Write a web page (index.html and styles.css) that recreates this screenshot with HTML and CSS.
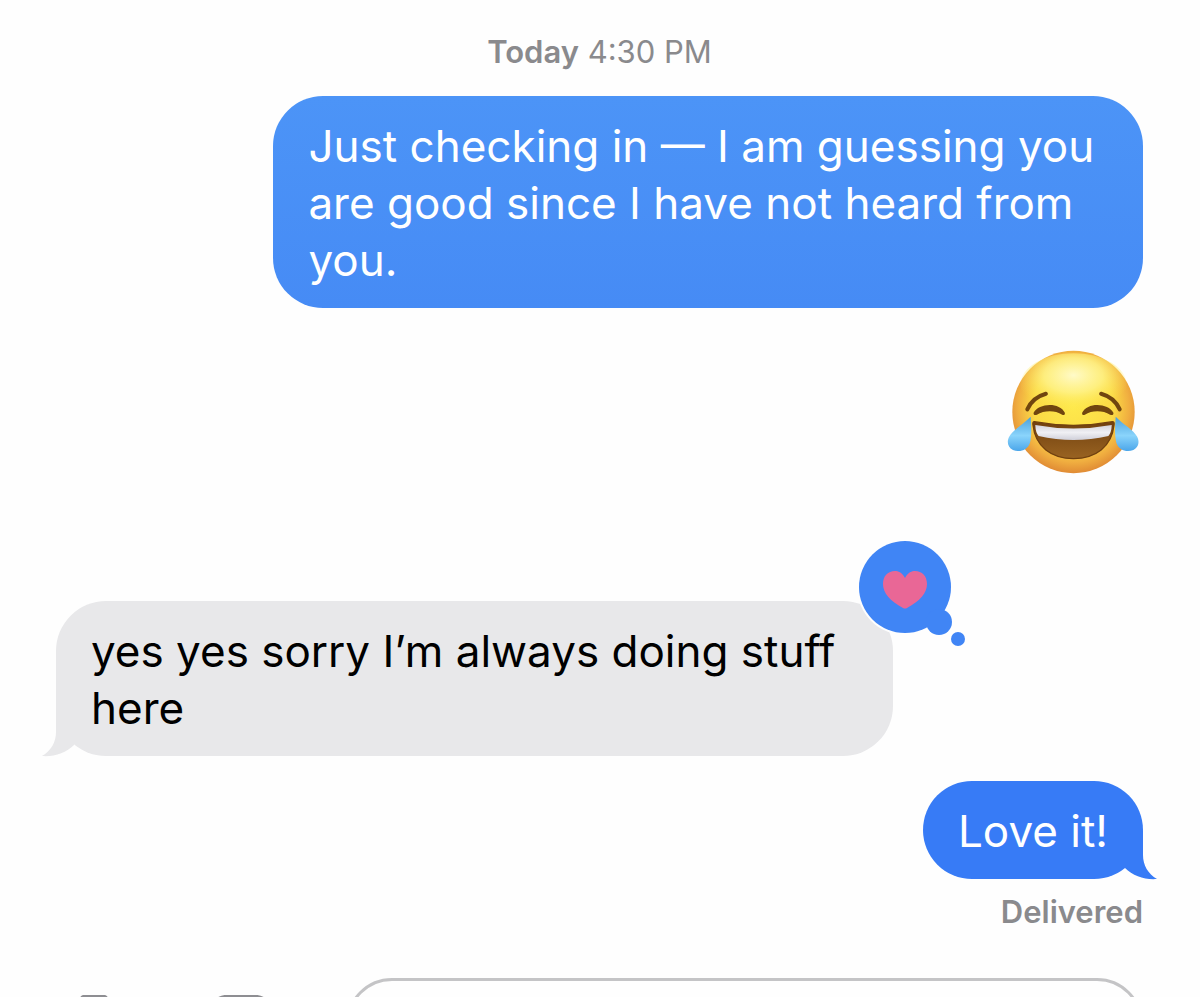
FILE: index.html
```
<!DOCTYPE html>
<html lang="en">
<head>
  <meta charset="UTF-8" />
  <meta name="viewport" content="width=device-width, initial-scale=1.0"/>
  <title>Messages</title>
  <link rel="stylesheet" href="styles.css">
</head>
<body>
  <main class="thread">
    <div class="timestamp"><strong>Today</strong> 4:30 PM</div>

    <div class="bubble sent early">Just checking in — I am guessing you are good since I have not heard from you.</div>

    <svg class="emoji" viewBox="50 40 409 390" role="img" aria-label="Face with tears of joy">
      <defs>
        <radialGradient id="face" cx="250" cy="215" r="202" gradientUnits="userSpaceOnUse">
          <stop offset="0" stop-color="#fee94c"/>
          <stop offset="0.6" stop-color="#fbd945"/>
          <stop offset="0.83" stop-color="#f0ae40"/>
          <stop offset="1" stop-color="#e08a34"/>
        </radialGradient>
        <radialGradient id="shine" cx="0.5" cy="0.35" r="0.55">
          <stop offset="0" stop-color="#fffac8"/>
          <stop offset="0.5" stop-color="#fff48c" stop-opacity="0.8"/>
          <stop offset="1" stop-color="#fee94c" stop-opacity="0"/>
        </radialGradient>
        <linearGradient id="mouth" x1="0" y1="0" x2="0" y2="1">
          <stop offset="0" stop-color="#70400f"/>
          <stop offset="1" stop-color="#996322"/>
        </linearGradient>
        <linearGradient id="teeth" x1="0" y1="0" x2="0" y2="1">
          <stop offset="0" stop-color="#d4d4dc"/>
          <stop offset="0.5" stop-color="#f0f0f4"/>
          <stop offset="1" stop-color="#d0d0da"/>
        </linearGradient>
        <linearGradient id="tear" x1="0" y1="0" x2="0" y2="1">
          <stop offset="0" stop-color="#4aa0dc"/>
          <stop offset="0.55" stop-color="#8ad4fb"/>
          <stop offset="1" stop-color="#4ba6ea"/>
        </linearGradient>
      </defs>
      <circle cx="250" cy="232" r="184" fill="url(#face)"/>
      <ellipse cx="250" cy="150" rx="160" ry="95" fill="url(#shine)"/>
      <g fill="none" stroke="#70450f" stroke-linecap="round">
        <path d="M111 224Q127 188 167 177" stroke-width="12"/>
        <path d="M389 224Q373 188 333 177" stroke-width="12"/>
      </g>
      <g fill="#70450f">
        <path d="M130 234C145 205 208 201 224 234C225 240 221 243 216 240C194 226 161 227 140 240C133 243 129 240 130 234Z"/>
        <path d="M370 234C355 205 292 201 276 234C275 240 279 243 284 240C306 226 339 227 360 240C367 243 371 240 370 234Z"/>
      </g>
      <path d="M132 261C129 261 127 264 128 270C135 337 184 372 250 372S365 337 372 270C373 264 371 261 367 261Q250 283 132 261Z" fill="url(#mouth)" stroke="#70400f" stroke-width="4"/>
      <path d="M135 271Q250 292 365 271Q364 294 355 304Q250 328 145 304Q136 294 135 271Z" fill="url(#teeth)"/>
      <path d="M121 246C123 274 125 302 119 325C112 346 88 355 68 346C51 338 49 320 57 306C67 286 99 269 121 246Z" fill="url(#tear)"/>
      <path d="M377 246C375 274 373 302 379 325C386 346 410 355 430 346C447 338 449 320 441 306C431 286 399 269 377 246Z" fill="url(#tear)"/>
    </svg>

    <div class="bubble received">yes yes sorry I’m always doing stuff here
      <svg class="tail" viewBox="0 0 40 54" aria-hidden="true">
        <path d="M15 0V29C15 39 10 48 1 53C13 54 25 50 33 42V0Z"/>
      </svg>
      <svg class="reaction" viewBox="0 0 110 108" role="img" aria-label="Loved">
        <circle class="ring" cx="47" cy="47" r="48"/>
        <circle cx="47" cy="47" r="46"/>
        <circle cx="81" cy="82" r="13"/>
        <circle cx="100" cy="99" r="7"/>
        <path class="heart" d="M47 38C44 32 40 31 37 31C30 31 25 36 25 44C25 53 32 61 45 68Q47 69 49 68C62 61 69 53 69 44C69 36 64 31 57 31C54 31 50 32 47 38Z"/>
      </svg>
    </div>

    <div class="bubble sent latest">Love it!
      <svg class="tail" viewBox="0 0 40 54" aria-hidden="true">
        <path d="M15 5V29C15 39 10 48 1 53C13 54 25 50 33 42V5Z"/>
      </svg>
    </div>
    <div class="status">Delivered</div>

    <form class="composer">
      <button type="button" class="tool" aria-label="Camera">
        <svg viewBox="0 0 80 64">
          <path d="M4 16Q4 12 10 12H20L26 4Q27 2 30 2H46Q49 2 50 4L56 12H66Q72 12 72 18V54Q72 60 66 60H10Q4 60 4 54Z"/>
          <circle cx="38" cy="35" r="14"/>
        </svg>
      </button>
      <button type="button" class="tool" aria-label="Apps">
        <svg viewBox="0 0 80 64">
          <rect x="4" y="2" width="72" height="60" rx="25"/>
          <path d="M26 48L43 18M37 18L54 48M22 40H58"/>
        </svg>
      </button>
      <input type="text" class="message-input" aria-label="Message">
    </form>
  </main>
</body>
</html>
```
FILE: styles.css
```
:root {
  --gray-text: #8a8a8d;
  --received: #e8e8ea;
  --sent: #377bf6;
  --reaction: #4085f5;
}
* {
  box-sizing: border-box;
}
body {
  font-family: Inter, "Liberation Sans", sans-serif;
  background: #fefefe;
  color: #000;
  margin: 0;
}
.thread {
  display: flex;
  flex-direction: column;
  height: 100vh;
  overflow: hidden;
  padding: 32px 57px 0 56px;
}
.thread > * {
  flex-shrink: 0;
}
.timestamp,
.status {
  color: var(--gray-text);
  font-size: 31px;
  line-height: 40px;
}
.timestamp {
  text-align: center;
  margin-bottom: 24px;
}
.timestamp strong,
.status {
  font-weight: 600;
}
.bubble {
  position: relative;
  font-size: 44px;
  line-height: 57px;
  padding: 22px 35px 19px;
  border-radius: 50px;
}
.sent {
  align-self: flex-end;
  max-width: 80%;
  background: var(--sent);
  color: #fff;
}
.early {
  background: linear-gradient(#4c94f7, #468bf5);
}
.received {
  align-self: flex-start;
  max-width: 77%;
  background: var(--received);
  margin-bottom: 25px;
}
.emoji {
  align-self: flex-end;
  width: 136px;
  height: 130px;
  margin: 40px 0 123px;
}
.tail {
  position: absolute;
  left: -15px;
  bottom: -1px;
  width: 40px;
  height: 54px;
  fill: var(--received);
}
.sent .tail {
  left: auto;
  right: -15px;
  transform: scaleX(-1);
  fill: var(--sent);
}
.reaction {
  position: absolute;
  right: -75px;
  top: -61px;
  width: 110px;
  height: 108px;
  overflow: visible;
  fill: var(--reaction);
}
.reaction .ring {
  fill: #fefefe;
}
.reaction .heart {
  fill: #e96796;
}
.status {
  text-align: right;
  margin: 13px 0 46px;
}
.composer {
  display: flex;
  align-items: flex-start;
  gap: 73px;
}
.tool {
  width: 72px;
  padding: 17px 0 0;
  border: 0;
  background: none;
}
.tool svg {
  display: block;
  width: 80px;
  fill: none;
  stroke: #8e8e92;
  stroke-width: 5;
}
.message-input {
  flex: 1;
  min-width: 0;
  height: 92px;
  padding: 0 34px;
  border: 3px solid #c4c4c6;
  border-radius: 46px;
  background: #fefefe;
  font: inherit;
  font-size: 44px;
}
```
